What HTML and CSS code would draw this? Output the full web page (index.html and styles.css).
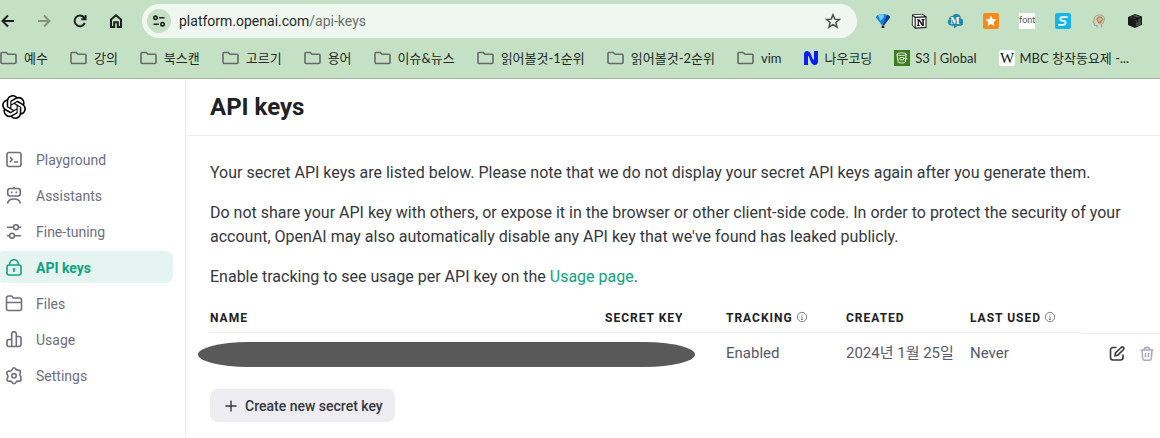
FILE: index.html
```html
<!DOCTYPE html>
<html lang="en">
<head>
  <meta charset="UTF-8">
  <meta name="viewport" content="width=device-width, initial-scale=1.0">
  <title>API keys</title>
  <link rel="stylesheet" href="styles.css">
</head>
<body>

  <!-- Icons used more than once -->
  <svg class="sprite" aria-hidden="true">
    <symbol id="folder" viewBox="0 0 17 16">
      <path d="M1 3.500A1 1 0 0 1 2 2.500h4.300l1.700 1.700h7a1 1 0 0 1 1 1v7.300a1 1 0 0 1-1 1H2a1 1 0 0 1-1-1z" fill="none" stroke="#646a66" stroke-width="1.600"/>
    </symbol>
    <symbol id="info" viewBox="0 0 12 12">
      <circle cx="6" cy="6" r="4.700" fill="none" stroke="#7b7b8c"/>
      <path d="M6 3.300v1.100M5.300 5.700H6v2.600M5 8.500h2" fill="none" stroke="#7b7b8c"/>
    </symbol>
  </svg>

  <!-- Browser bar -->
  <header class="browser">
    <div class="toolbar">
      <div class="nav-buttons">
        <button aria-label="Back"><svg width="16" height="16" viewBox="0 0 16 16"><path d="M14 8H3M8 2.500 2.500 8 8 13.500" /></svg></button>
        <button aria-label="Forward" class="off"><svg width="16" height="16" viewBox="0 0 16 16"><path d="M2 8h11M8 2.500 13.500 8 8 13.500" /></svg></button>
        <button aria-label="Reload"><svg width="16" height="16" viewBox="0 0 16 16"><path d="M12.800 10A5.300 5.300 0 1 1 12 4.500L13.500 6M13.600 2v4.200H9.300" /></svg></button>
        <button aria-label="Home"><svg width="16" height="16" viewBox="0 0 16 16"><path d="M3 14V6.500L8 2.300l5 4.200V14H9.800V9.200H6.200V14z" /></svg></button>
      </div>

      <div class="address">
        <button class="site-info" aria-label="Site information">
          <svg width="14" height="14" viewBox="0 0 14 14"><circle cx="3.500" cy="3.800" r="1.700"/><path d="M7 3.800h5.500M1.500 10.200H7"/><circle cx="10.500" cy="10.200" r="1.700"/></svg>
        </button>
        <div class="url">platform.openai.com<span>/api-keys</span></div>
        <button class="star" aria-label="Bookmark this page">
          <svg width="16" height="16" viewBox="0 0 18 18"><path d="m9 2 2 4.900 5.200.4-4 3.400 1.300 5.100L9 13l-4.500 2.800 1.300-5.100-4-3.400 5.200-.4z"/></svg>
        </button>
      </div>

      <div class="extensions">
        <button aria-label="Balloon">
          <svg width="16" height="16" viewBox="0 0 16 16"><path d="M1 4.500C1 2.500 4 1.300 8 1.300s7 1.200 7 3.200L9.200 12H6.800z" fill="#1680d8"/><path d="M3 2.500C4.500 1.500 6 1.300 8.500 1.300L9 4 5.500 8z" fill="#72cbff"/><path d="M12 2c2 .6 3 1.500 3 2.500L9.200 12H8z" fill="#0b3b87"/><path d="M6.700 12.500h2.600V15H6.700z" fill="#222"/></svg>
        </button>
        <button aria-label="Notion">
          <svg width="16" height="16" viewBox="0 0 16 16"><path d="M1 1.500 11.500.700 15.500 3.500V15L4 15.700.800 12z" fill="#111"/><path d="M2 2.300 11 1.600l2.500 1.600-9 .6z" fill="#fff"/><path d="M1.700 3 3.600 4.700v9.500L1.700 12z" fill="#fff"/><path d="M4.700 5.100 14.500 4.500V14l-9.800.6z" fill="#fff"/><path d="M6 6.300h2.400l3 4.500V7.200l-.9-.2v-.9h3V7l-.7.200V13h-1.600L7.900 8v4l1 .2v.8H6v-.8l.7-.2V7.200L6 7z" fill="#111"/></svg>
        </button>
        <button aria-label="Cloud notes">
          <svg width="16" height="16" viewBox="0 0 16 16"><path d="M4 12.500a3.500 3.500 0 0 1-2.200-6A3.800 3.800 0 0 1 5.500 3a4.500 4.500 0 0 1 8.300 2.500A3.700 3.700 0 0 1 13 12.800l-2.500.2-3.500 2.500.2-2.700z" fill="#2789a8"/><text x="8" y="11" text-anchor="middle" class="mark-m">M</text></svg>
        </button>
        <button aria-label="Favourites">
          <svg width="16" height="16" viewBox="0 0 16 16"><rect width="16" height="16" rx="2" fill="#f7891b"/><path d="m8 2.500 1.600 3.600 3.900.4-2.900 2.700.8 3.900L8 11.100l-3.400 2 .8-3.900-2.900-2.700 3.900-.4z" fill="#fff"/></svg>
        </button>
        <button aria-label="Font finder"><span class="font-mark">font</span></button>
        <button aria-label="S tools">
          <svg width="16" height="16" viewBox="0 0 16 16"><rect width="16" height="16" rx="2" fill="#13b5ea"/><path d="M12.800 4.200H7.600C4.700 4.200 4.500 7.300 7 7.600l2 .2c2.500.4 2 4-1 4H3.200" fill="none" stroke="#fff" stroke-width="1.800"/></svg>
        </button>
        <button aria-label="Ideas">
          <svg width="16" height="16" viewBox="0 0 16 16"><path d="M10.500 14.500v-3C14 9.500 15 2 8.500 2 3.500 2 3 5.500 3.200 7L2 9.300l1.300.7v2.200l2.700.3v2" fill="#d8cfbf" stroke="#978a7d" stroke-width=".8"/><path d="M6 6.500c0-3.600 5.500-3.600 5.500 0C11 8 10 8.500 9.800 10H7.700C7.500 8.500 6.200 8 6 6.500z" fill="#b98f8f" stroke="#85706b" stroke-width=".8"/><circle cx="8.800" cy="6.400" r="1.600" fill="#f0cb3d"/></svg>
        </button>
        <button aria-label="Package">
          <svg width="16" height="16" viewBox="0 0 16 16"><path d="m1 4 7-3 7 2.500v8.300L8 15l-7-3z" fill="#171a17"/><path d="M2.300 4.100 8.200 2l5 1.700-5.500 2z" fill="#515b51"/><path d="M8.700 7v6.700l5.300-2.400V5z" fill="#414a41"/><path d="m4.500 3.300 6 1.900v4" fill="none" stroke="#111" stroke-width="1.400"/></svg>
        </button>
      </div>
    </div>

    <nav class="bookmarks" aria-label="Bookmarks">
      <a href="#"><svg class="dir"><use href="#folder"/></svg>예수</a>
      <a href="#"><svg class="dir"><use href="#folder"/></svg>강의</a>
      <a href="#"><svg class="dir"><use href="#folder"/></svg>북스캔</a>
      <a href="#"><svg class="dir"><use href="#folder"/></svg>고르기</a>
      <a href="#"><svg class="dir"><use href="#folder"/></svg>용어</a>
      <a href="#"><svg class="dir"><use href="#folder"/></svg>이슈&amp;뉴스</a>
      <a href="#"><svg class="dir"><use href="#folder"/></svg>읽어볼것-1순위</a>
      <a href="#"><svg class="dir"><use href="#folder"/></svg>읽어볼것-2순위</a>
      <a href="#"><svg class="dir"><use href="#folder"/></svg>vim</a>
      <a href="#" class="site"><svg width="16" height="16" viewBox="0 0 16 16"><path d="M1 15V4.500c0-4.500 5-4.500 6.500-1l2 5c.8 2 1.500 1.500 1.500 0V1h4v10.500c0 4.500-5.500 4.500-7 .5l-2-5C5.300 5 5 6 5 7v8z" fill="#0b1df5"/></svg>나우코딩</a>
      <a href="#" class="site"><svg width="16" height="16" viewBox="0 0 16 16"><rect width="16" height="16" fill="#3c7d22"/><path d="m3 4 1.200 8c1 1.300 6 1.300 7 0l1-8" fill="none" stroke="#dcebd5" stroke-width="1.200"/><ellipse cx="7.600" cy="4.200" rx="4.700" ry="1.300" fill="none" stroke="#dcebd5"/><path d="M6 7.500h3.500V10H6zM9.500 8l4 1" fill="none" stroke="#dcebd5"/></svg>S3 | Global</a>
      <a href="#" class="site"><svg width="16" height="16" viewBox="0 0 16 16"><rect width="16" height="16" rx="3" fill="#fff"/><text x="8" y="13" text-anchor="middle" class="mark-w">W</text></svg>MBC 창작동요제 -...</a>
    </nav>
  </header>

  <div class="app">
    <aside class="sidebar">
      <a href="#" class="logo" aria-label="OpenAI">
        <svg width="24" height="24" viewBox="0 0 24 24"><path d="M22.2819 9.8211a5.9847 5.9847 0 0 0-.5157-4.9108 6.0462 6.0462 0 0 0-6.5098-2.9A6.0651 6.0651 0 0 0 4.9807 4.1818a5.9847 5.9847 0 0 0-3.9977 2.9 6.0462 6.0462 0 0 0 .7427 7.0966 5.98 5.98 0 0 0 .511 4.9107 6.051 6.051 0 0 0 6.5146 2.9001A5.9847 5.9847 0 0 0 13.2599 24a6.0557 6.0557 0 0 0 5.7718-4.2058 5.9894 5.9894 0 0 0 3.9977-2.9001 6.0557 6.0557 0 0 0-.7475-7.0729zm-9.022 12.6081a4.4755 4.4755 0 0 1-2.8764-1.0408l.1419-.0804 4.7783-2.7582a.7948.7948 0 0 0 .3927-.6813v-6.7369l2.02 1.1686a.071.071 0 0 1 .038.052v5.5826a4.504 4.504 0 0 1-4.4945 4.4944zm-9.6607-4.1254a4.4708 4.4708 0 0 1-.5346-3.0137l.142.0852 4.783 2.7582a.7712.7712 0 0 0 .7806 0l5.8428-3.3685v2.3324a.0804.0804 0 0 1-.0332.0615L9.74 19.9502a4.4992 4.4992 0 0 1-6.1408-1.6464zM2.3408 7.8956a4.485 4.485 0 0 1 2.3655-1.9728V11.6a.7664.7664 0 0 0 .3879.6765l5.8144 3.3543-2.0201 1.1685a.0757.0757 0 0 1-.071 0l-4.8303-2.7865A4.504 4.504 0 0 1 2.3408 7.872zm16.5963 3.8558L13.1038 8.364 15.1192 7.2a.0757.0757 0 0 1 .071 0l4.8303 2.7913a4.4944 4.4944 0 0 1-.6765 8.1042v-5.6772a.79.79 0 0 0-.407-.667zm2.0107-3.0231l-.142-.0852-4.7735-2.7818a.7759.7759 0 0 0-.7854 0L9.409 9.2297V6.8974a.0662.0662 0 0 1 .0284-.0615l4.8303-2.7866a4.4992 4.4992 0 0 1 6.6802 4.66zM8.3065 12.863l-2.02-1.1638a.0804.0804 0 0 1-.038-.0567V6.0742a4.4992 4.4992 0 0 1 7.3757-3.4537l-.142.0805L8.704 5.459a.7948.7948 0 0 0-.3927.6813zm1.0976-2.3654l2.602-1.4998 2.6069 1.4998v2.9994l-2.5974 1.4997-2.6067-1.4997Z"/></svg>
      </a>
      <nav class="menu">
        <a href="#"><svg viewBox="0 0 18 18"><rect x="2" y="1.500" width="14" height="14" rx="2"/><path d="m5 6 2.300 2.500L5 11M9 11h4"/></svg>Playground</a>
        <a href="#"><svg viewBox="0 0 18 18"><rect x="2.700" y="1.500" width="12.600" height="7.500" rx="2.500"/><path d="M9 0v1.500M6.700 4.500v1.800M11.300 4.500v1.800M2.500 16.500c1-6 12-6 13 0"/></svg>Assistants</a>
        <a href="#"><svg viewBox="0 0 18 18"><path d="M2 4.200h6.500M13.500 4.200H16M2 12.700h2.500M9.500 12.700H16"/><circle cx="11" cy="4.200" r="2.400"/><circle cx="7" cy="12.700" r="2.400"/></svg>Fine-tuning</a>
        <a href="#" class="active"><svg viewBox="0 0 18 18"><rect x="2" y="6" width="14" height="10" rx="2"/><path d="M4.500 6C4.500-1 13.500-1 13.500 6M9 9.500v3.500M7.700 10h2.600"/></svg>API keys</a>
        <a href="#"><svg viewBox="0 0 18 18"><path d="M1.500 3a2 2 0 0 1 2-2h3.200l1.600 2h6.200a2 2 0 0 1 2 2v8.500a2 2 0 0 1-2 2h-11a2 2 0 0 1-2-2zM1.500 7.500h15"/></svg>Files</a>
        <a href="#"><svg viewBox="0 0 18 18"><path d="M6.700 15.500V3a2.300 2.300 0 0 1 4.600 0v12.500M6.700 8.500H4a2 2 0 0 0-2 2v3a2 2 0 0 0 2 2h10a2 2 0 0 0 2-2v-6a2 2 0 0 0-2-2h-2.700"/></svg>Usage</a>
        <a href="#"><svg viewBox="0 0 18 18"><path d="M9 .8c1.100 0 1.500.8 2 1.500s1 .9 1.900.8c1 0 1.900 0 2.400.9.600 1 .2 1.700-.2 2.500s-.4 1.200 0 2c.4.800.8 1.600.8 1s-.4 2.300 0 3 -.3 1.700-1.600 1.700-2.500-.4-3.300 1C10.500 16 10.100 16.800 9 16.800s-1.500-.8-2-1.600c-.8-1.400-2-1-3.300-1s-2.200-1-1.600-2.200.9-1.600.9-2.500-.5-1.300-.9-2.200-.5-2.200.6-2.900c1-.6 2.300 0 3.300-.5S7.500.8 9 .8z"/><circle cx="9" cy="8.800" r="2.200"/></svg>Settings</a>
      </nav>
    </aside>

    <main>
      <div class="page-head"><h1>API keys</h1></div>

      <div class="content">
        <p>Your secret API keys are listed below. Please note that we do not display your secret API keys again after you generate them.</p>
        <p>Do not share your API key with others, or expose it in the browser or other client-side code. In order to protect the security of your account, OpenAI may also automatically disable any API key that we've found has leaked publicly.</p>
        <p>Enable tracking to see usage per API key on the <a href="#">Usage page</a>.</p>

        <table>
          <colgroup>
            <col>
            <col class="col-key">
            <col class="col-tracking">
            <col class="col-created">
            <col class="col-used">
            <col class="col-actions">
          </colgroup>
          <thead>
            <tr>
              <th>Name</th>
              <th>Secret key</th>
              <th>Tracking<svg class="info"><use href="#info"/></svg></th>
              <th>Created</th>
              <th>Last used<svg class="info"><use href="#info"/></svg></th>
              <td></td>
            </tr>
          </thead>
          <tbody>
            <tr>
              <td colspan="2"><div class="redacted"></div></td>
              <td>Enabled</td>
              <td>2024년 1월 25일</td>
              <td>Never</td>
              <td class="actions">
                <div>
                  <button aria-label="Edit"><svg width="16" height="16" viewBox="0 0 16 16"><path d="M7.500 1.500H4A2.500 2.500 0 0 0 1.500 4v7.500A2.500 2.500 0 0 0 4 14h7.500a2.500 2.500 0 0 0 2.500-2.500v-3M6 9.700 6.500 7l5.700-5.500a1.500 1.500 0 0 1 2.200 2.200L8.700 9.200z"/></svg></button>
                  <button aria-label="Delete" class="trash"><svg width="16" height="16" viewBox="0 0 16 16"><path d="M1.500 4h13M3 4l.7 8.500a2 2 0 0 0 2 1.800h4.600a2 2 0 0 0 2-1.800L13 4M5 4c.3-3.500 5.700-3.500 6 0M6.500 7v4.200M9.500 7v4.200"/></svg></button>
                </div>
              </td>
            </tr>
          </tbody>
        </table>

        <button class="create"><svg width="14" height="14" viewBox="0 0 14 14"><path d="M7 1.500v11M1.500 7h11"/></svg>Create new secret key</button>
      </div>
    </main>
  </div>

</body>
</html>
```
FILE: styles.css
```css
* { box-sizing: border-box; margin: 0; padding: 0; }

body {
  font-family: Roboto, "Noto Sans CJK KR", sans-serif;
  font-size: 16px;
  line-height: 24px;
  color: #353740;
  background: #fff;
  overflow-x: hidden;
}

a { color: inherit; text-decoration: none; }
button { font: inherit; color: inherit; background: none; border: none; cursor: pointer; }
svg { flex: none; }
.sprite { position: absolute; width: 0; height: 0; }

/* — BROWSER BAR ————————————— */
.browser {
  background: #c5e1c5;
  border-bottom: 1px solid #a3b5a3;
  color: #1f2a1f;
}
.toolbar {
  display: flex;
  align-items: center;
  gap: 8px;
  padding: 4px 7px 4px 0;
}
.nav-buttons, .extensions { display: flex; }
.nav-buttons { margin-left: -10px; }
.nav-buttons button, .extensions button {
  display: flex;
  align-items: center;
  justify-content: center;
  width: 36px;
  height: 34px;
}
.nav-buttons path { fill: none; stroke: #1e211e; stroke-width: 2; }
.nav-buttons .off { opacity: 0.4; }

.address {
  flex: 1;
  display: flex;
  align-items: center;
  height: 34px;
  padding: 0 16px 0 5px;
  border-radius: 17px;
  background: #f0f7f0;
}
.site-info {
  display: flex;
  align-items: center;
  justify-content: center;
  width: 24px;
  height: 24px;
  border-radius: 50%;
  background: #c5e1c5;
}
.site-info path, .site-info circle { fill: none; stroke: #1e211e; stroke-width: 1.6; }
.url { flex: 1; padding-left: 8px; font-size: 14px; }
.url span { color: #6a706a; }
.star { display: flex; }
.star path { fill: none; stroke: #4a4f4a; stroke-width: 1.7; }

.mark-m { font: bold 10px "Liberation Serif", serif; fill: #fff; }
.mark-w { font: 15px "Liberation Serif", serif; fill: #111; }
.font-mark {
  width: 16px;
  height: 16px;
  background: #fff;
  color: #555;
  font-size: 9px;
  line-height: 14px;
}

.bookmarks {
  display: flex;
  gap: 22px;
  padding: 4px 0 8px;
  font-family: Lato, "Noto Sans CJK KR", sans-serif;
  font-size: 13px;
  white-space: nowrap;
}
.bookmarks a { display: flex; align-items: center; gap: 7px; }
.bookmarks .site { gap: 5px; }
.dir { width: 17px; height: 16px; }

/* — SIDEBAR ————————————— */
.app { display: flex; min-height: calc(100vh - 79px); }
.sidebar {
  flex: none;
  width: 186px;
  padding: 16px 12px 16px 0;
  border-right: 1px solid #ececf1;
}
.logo { display: block; height: 24px; margin-left: 2px; }
.menu {
  display: flex;
  flex-direction: column;
  gap: 4px;
  margin: 24px 0 0 -4px;
}
.menu a {
  display: flex;
  align-items: center;
  gap: 13px;
  height: 32px;
  padding: 2px 0 0 9px;
  border-radius: 8px;
  font-size: 14px;
  color: #6e6e80;
}
.menu svg {
  width: 18px;
  height: 18px;
  fill: none;
  stroke: currentColor;
  stroke-width: 1.6;
}
.menu .active { background: #e5f3f1; color: #10a37f; font-weight: bold; }

/* — MAIN ————————————— */
main { flex: 1; min-width: 0; }
.page-head { padding: 12px 24px; border-bottom: 1px solid #ececf1; }
h1 { font-size: 24px; line-height: 32px; color: #202123; }
.content { padding: 25px 0 16px 24px; }
.content p { margin-bottom: 16px; }
.content p a { color: #10a37f; }

table { width: 100%; table-layout: fixed; border-spacing: 0; }
.col-key { width: 121px; }
.col-tracking { width: 120px; }
.col-created { width: 124px; }
.col-used { width: 112px; }
.col-actions { width: 78px; }
th {
  height: 28px;
  padding-bottom: 1px;
  border-bottom: 1px solid #ececf1;
  font-size: 12px;
  letter-spacing: 1px;
  text-align: left;
  text-transform: uppercase;
  color: #202123;
}
.info { width: 12px; height: 12px; margin-left: 3px; vertical-align: -1px; }
tbody td { height: 40px; color: #565869; white-space: nowrap; font-size: 15px; }
.redacted {
  height: 25px;
  margin: 2px 31px 0 -12px;
  border-radius: 50px / 50%;
  background: #595959;
}
td.actions { border-top: 1px solid #ececf1; }
.actions div { display: flex; justify-content: flex-end; gap: 14px; padding-right: 5px; }
.actions button { display: flex; }
.actions path { fill: none; stroke: #353740; stroke-width: 1.6; }
.actions .trash path { stroke: #acacbe; }

.create {
  display: flex;
  align-items: center;
  gap: 7px;
  height: 33px;
  margin-top: 16px;
  padding: 0 12px 0 14px;
  border-radius: 8px;
  background: #ececf1;
  font-size: 14px;
  font-weight: 500;
}
.create path { stroke: #353740; stroke-width: 1.4; }
```
